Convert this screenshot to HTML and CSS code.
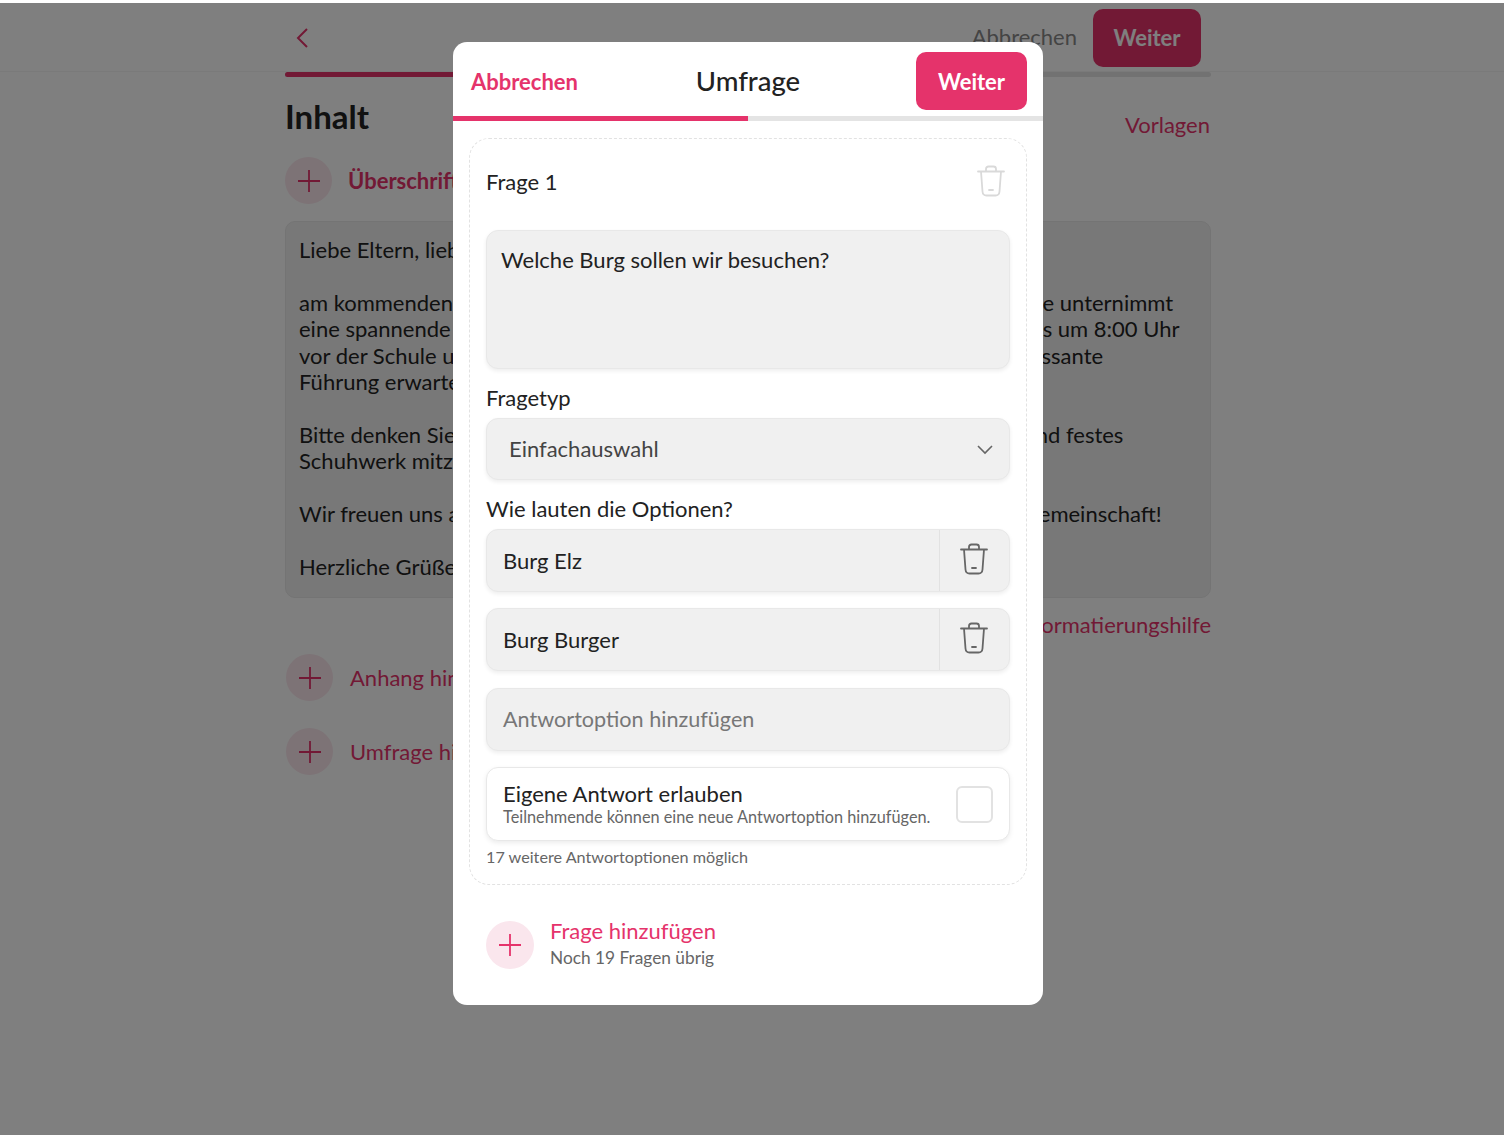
FILE: index.html
```html
<!DOCTYPE html>
<html lang="de">
<head>
<meta charset="UTF-8" />
<title>Umfrage</title>
<link rel="stylesheet" href="styles.css">
</head>
<body>

<div class="topbar">
  <svg class="back" width="14" height="22" viewBox="0 0 14 22"><path d="M12 2 3 11l9 9" /></svg>
  <div class="topbar-actions">
    <span class="topbar-cancel">Abbrechen</span>
    <span class="btn-primary">Weiter</span>
  </div>
</div>

<div class="page">
  <div class="progress page-progress"><div class="progress-fill"></div></div>

  <div class="section-head">
    <h1>Inhalt</h1>
    <a class="link">Vorlagen</a>
  </div>

  <div class="add-row first-add">
    <span class="plus-circle"><svg width="24" height="24" viewBox="0 0 24 24"><path d="M12 1v22M1 12h22" /></svg></span>
    <span class="add-label bold">Überschrift hinzufügen</span>
  </div>

  <div class="letter">
    <p>Liebe Eltern, liebe Kinder,</p>
    <p>am kommenden Freitag, dem 14. Juni, steht ein Ausflug an: Unsere Schulklasse unternimmt<br>
    eine spannende Exkursion zu einer Burg in unserer Umgebung. Wir treffen uns um 8:00 Uhr<br>
    vor der Schule und fahren von da gemeinsam los. Vor Ort wird uns eine interessante<br>
    Führung erwartet.</p>
    <p>Bitte denken Sie daran, Ihrem Kind wetterfeste Kleidung, Proviant, Getränk und festes<br>
    Schuhwerk mitzugeben.</p>
    <p>Wir freuen uns auf einen schönen und lehrreichen Ausflug in unsrer Klassengemeinschaft!</p>
    <p>Herzliche Grüße</p>
  </div>

  <div class="format-help"><a class="link">Formatierungshilfe</a></div>

  <div class="add-row attach-add">
    <span class="plus-circle"><svg width="24" height="24" viewBox="0 0 24 24"><path d="M12 1v22M1 12h22" /></svg></span>
    <span class="add-label">Anhang hinzufügen</span>
  </div>
  <div class="add-row survey-add">
    <span class="plus-circle"><svg width="24" height="24" viewBox="0 0 24 24"><path d="M12 1v22M1 12h22" /></svg></span>
    <span class="add-label">Umfrage hinzufügen</span>
  </div>
</div>

<div class="overlay">
  <div class="modal">
    <div class="modal-head">
      <a class="modal-cancel">Abbrechen</a>
      <h2>Umfrage</h2>
      <span class="btn-primary">Weiter</span>
    </div>
    <div class="progress"><div class="progress-fill"></div></div>

    <div class="question">
      <div class="question-head">
        <span>Frage 1</span>
        <svg class="trash trash-light" width="30" height="32" viewBox="0 0 30 32"><path d="M2 6.5h26M5 6.5l1.5 20q.3 4 4 4h9q3.7 0 4-4l1.5-20M10 6.5V4q0-2.500 2.500-2.500h5Q20 1.500 20 4v2.500M13 25h4" /></svg>
      </div>

      <div class="field field-text">Welche Burg sollen wir besuchen?</div>

      <div class="field-label">Fragetyp</div>
      <div class="field field-select">
        <span>Einfachauswahl</span>
        <svg width="16" height="11" viewBox="0 0 16 11"><path d="m1 2 7 7 7-7" /></svg>
      </div>

      <div class="field-label">Wie lauten die Optionen?</div>
      <div class="field field-option">
        <span class="option-name">Burg Elz</span>
        <span class="option-delete"><svg class="trash" width="30" height="32" viewBox="0 0 30 32"><path d="M2 6.5h26M5 6.5l1.5 20q.3 4 4 4h9q3.7 0 4-4l1.5-20M10 6.5V4q0-2.500 2.500-2.500h5Q20 1.500 20 4v2.500M13 25h4" /></svg></span>
      </div>
      <div class="field field-option">
        <span class="option-name">Burg Burger</span>
        <span class="option-delete"><svg class="trash" width="30" height="32" viewBox="0 0 30 32"><path d="M2 6.5h26M5 6.5l1.5 20q.3 4 4 4h9q3.7 0 4-4l1.5-20M10 6.5V4q0-2.500 2.500-2.500h5Q20 1.500 20 4v2.500M13 25h4" /></svg></span>
      </div>
      <div class="field field-option">
        <span class="option-name placeholder">Antwortoption hinzufügen</span>
      </div>

      <div class="allow-own">
        <div>
          <div class="allow-title">Eigene Antwort erlauben</div>
          <div class="allow-sub">Teilnehmende können eine neue Antwortoption hinzufügen.</div>
        </div>
        <span class="checkbox"></span>
      </div>
      <div class="hint">17 weitere Antwortoptionen möglich</div>
    </div>

    <div class="add-question">
      <span class="plus-circle"><svg width="24" height="24" viewBox="0 0 24 24"><path d="M12 1v22M1 12h22" /></svg></span>
      <div class="add-question-text">
        <div class="add-question-title">Frage hinzufügen</div>
        <div class="add-question-sub">Noch 19 Fragen übrig</div>
      </div>
    </div>
  </div>
</div>

</body>
</html>
```

FILE: styles.css
```css
/* Base */
* {
  box-sizing: border-box;
}
html, body {
  margin: 0;
  height: 1135px;
  overflow: hidden;
}
body {
  position: relative;
  background: #fff;
  font-family: 'Lato', sans-serif;
  font-size: 22px;
  color: #222;
}
p {
  margin: 0;
}

/* Page behind the dialog */
.topbar {
  height: 72px;
  padding: 9px 303px 0 285px;
  display: flex;
  justify-content: space-between;
  align-items: flex-start;
  border-bottom: 1px solid #f4f4f4;
}
.page {
  width: 926px;
  margin-left: 285px;
}
.back {
  margin: 18px 0 0 10px;
  fill: none;
  stroke: #e5336b;
  stroke-width: 2;
}
.topbar-actions {
  display: flex;
  align-items: center;
  gap: 16px;
}
.topbar-cancel {
  margin-bottom: 3px;
  color: #888;
  font-size: 22px;
}
.btn-primary {
  display: flex;
  align-items: center;
  justify-content: center;
  width: 108px;
  height: 58px;
  background: #e5336b;
  color: #fff;
  border-radius: 10px;
  font-size: 22px;
  font-weight: 700;
}
.topbar .btn-primary {
  padding-bottom: 2px;
}
.progress {
  height: 5px;
  background: #e4e4e4;
}
.progress-fill {
  width: 50%;
  height: 100%;
  background: #e5336b;
}
.page-progress {
  border-radius: 3px;
  overflow: hidden;
}
.section-head {
  display: flex;
  justify-content: space-between;
  align-items: flex-end;
  height: 61px;
}
h1 {
  margin: 0 0 2px;
  font-size: 33px;
  font-weight: 700;
  line-height: 40px;
  color: #222;
}
.link {
  color: #e5336b;
  font-size: 22px;
  line-height: 26px;
}
.section-head .link {
  margin-right: 1px;
}
.add-row {
  display: flex;
  align-items: center;
  gap: 17px;
}
.first-add {
  margin-top: 19px;
  gap: 16px;
}
.plus-circle {
  flex: none;
  width: 47px;
  height: 47px;
  border-radius: 50%;
  background: #fae6ed;
  display: flex;
  align-items: center;
  justify-content: center;
}
.plus-circle svg {
  fill: none;
  stroke: #e5336b;
  stroke-width: 1.8;
}
.add-label {
  color: #e5336b;
  font-size: 22px;
}
.add-label.bold {
  font-weight: 700;
}
.letter {
  margin-top: 17px;
  height: 377px;
  padding: 15px 13px;
  background: #f1f1f1;
  border: 1px solid #e8e8e8;
  border-radius: 10px;
  font-size: 22px;
  line-height: 26.4px;
  white-space: nowrap;
}
.letter p {
  margin-bottom: 26.4px;
}
.format-help {
  margin-top: 13px;
  text-align: right;
}
.attach-add {
  margin: 16px 0 0 1px;
}
.survey-add {
  margin: 27px 0 0 1px;
}

/* Dim layer */
.overlay {
  position: absolute;
  inset: 3px 0 0 0;
  padding-right: 8px;
  background: rgba(0, 0, 0, 0.5);
  display: flex;
  justify-content: center;
  align-items: flex-start;
}

/* Dialog */
.modal {
  width: 590px;
  height: 963px;
  margin-top: 39px;
  background: #fff;
  border-radius: 14px;
  overflow: hidden;
}
.modal-head {
  position: relative;
  height: 74px;
  padding: 10px 16px 0 18px;
  display: flex;
  justify-content: space-between;
  align-items: flex-start;
}
.modal-head .btn-primary {
  width: 111px;
}
.modal-cancel {
  margin-top: 16px;
  color: #e5336b;
  font-weight: 700;
  font-size: 22px;
}
h2 {
  position: absolute;
  left: 0;
  right: 0;
  top: 22px;
  margin: 0;
  text-align: center;
  font-size: 27.5px;
  line-height: 34px;
  font-weight: 500;
  color: #222;
}
.question {
  margin: 17px 16px 0 16px;
  height: 747px;
  padding: 0 16px;
  border: 1px dashed #e2e2e2;
  border-radius: 20px;
}
.question-head {
  height: 91px;
  display: flex;
  justify-content: space-between;
  align-items: center;
  padding-bottom: 7px;
}
.trash {
  fill: none;
  stroke: #666;
  stroke-width: 1.8;
  stroke-linecap: round;
  stroke-linejoin: round;
}
.trash-light {
  stroke: #d9d9d9;
  margin: -1px 4px 0 0;
}
.field {
  background: #f0f0f0;
  border: 1px solid #e8e8e8;
  border-radius: 12px;
  box-shadow: 0 2px 4px rgba(0, 0, 0, 0.07);
}
.field-text {
  height: 139px;
  padding: 15px 14px;
  line-height: 28px;
}
.field-label {
  height: 49px;
  padding-top: 15px;
  line-height: 28px;
}
.field-select {
  height: 62px;
  padding: 0 16px 2px 22px;
  display: flex;
  justify-content: space-between;
  align-items: center;
  color: #444;
}
.field-select svg {
  fill: none;
  stroke: #666;
  stroke-width: 1.6;
  margin-top: 2px;
}
.field-option {
  height: 63px;
  margin-bottom: 16.4px;
  display: flex;
}
.option-name {
  flex: 1;
  padding-left: 16px;
  display: flex;
  align-items: center;
}
.placeholder {
  color: #777;
  font-size: 21.6px;
}
.option-delete {
  width: 70px;
  padding: 0 2px 4px 0;
  border-left: 1px solid #e2e2e2;
  display: flex;
  align-items: center;
  justify-content: center;
}
.allow-own {
  height: 74px;
  padding: 0 16px;
  display: flex;
  justify-content: space-between;
  align-items: center;
  background: #fff;
  border: 1px solid #e8e8e8;
  border-radius: 12px;
  box-shadow: 0 2px 5px rgba(0, 0, 0, 0.08);
}
.allow-title {
  line-height: 26px;
}
.allow-sub {
  font-size: 16.3px;
  line-height: 20px;
  color: #666;
}
.checkbox {
  width: 37px;
  height: 37px;
  border: 2px solid #e2e2e2;
  border-radius: 6px;
}
.hint {
  margin-top: 5px;
  font-size: 16.2px;
  line-height: 22px;
  color: #666;
}
.add-question {
  margin: 32px 0 0 33px;
  display: flex;
  align-items: center;
  gap: 16px;
}
.add-question .plus-circle {
  width: 48px;
  height: 48px;
}
.add-question-text {
  padding-bottom: 2px;
}
.add-question-title {
  color: #e5336b;
  line-height: 28px;
}
.add-question-sub {
  font-size: 17.3px;
  line-height: 25px;
  color: #666;
}
```
